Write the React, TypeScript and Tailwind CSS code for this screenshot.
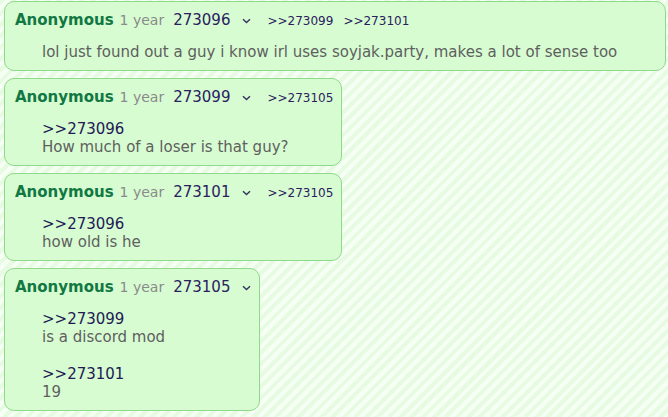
import React from "react";

type Post = {
  no: string;
  backlinks: string[];
  body: { quote?: string; text?: string; blank?: boolean }[];
  fill?: boolean;
};

const posts: Post[] = [
  {
    no: "273096",
    backlinks: ["273099", "273101"],
    body: [{ text: "lol just found out a guy i know irl uses soyjak.party, makes a lot of sense too" }],
    fill: true,
  },
  {
    no: "273099",
    backlinks: ["273105"],
    body: [{ quote: "273096" }, { text: "How much of a loser is that guy?" }],
  },
  {
    no: "273101",
    backlinks: ["273105"],
    body: [{ quote: "273096" }, { text: "how old is he" }],
  },
  {
    no: "273105",
    backlinks: [],
    body: [
      { quote: "273099" },
      { text: "is a discord mod" },
      { blank: true },
      { quote: "273101" },
      { text: "19" },
    ],
  },
];

function Chevron() {
  return (
    <svg width="9" height="6" viewBox="0 0 9 6" className="ml-[12px] self-center mt-[1px]">
      <path d="M1 1.2 L4.5 4.6 L8 1.2" fill="none" stroke="#34345c" strokeWidth="1.4" />
    </svg>
  );
}

function PostCard({ p }: { p: Post }) {
  return (
    <div
      className={
        "rounded-[10px] border border-[#8fd98a] bg-[#d7fcd1] pt-[8px] pb-[9px] pl-[10px] pr-[8px] " +
        (p.fill ? "self-stretch mr-[2px]" : "")
      }
    >
      <div className="flex items-baseline h-[20px] leading-[20px] whitespace-nowrap">
        <span className="font-bold text-[15px] text-[#117743]">Anonymous</span>
        <span className="ml-[6px] text-[14px] text-[#8a8a8a]">1 year</span>
        <span className="ml-[9px] text-[15px] text-[#2a2060]">{p.no}</span>
        <Chevron />
        {p.backlinks.map((b, i) => (
          <span
            key={b}
            className={"text-[12px] text-[#2a2060] " + (i > 0 ? "ml-[10px]" : "ml-[16px]")}
          >
            &gt;&gt;{b}
          </span>
        ))}
      </div>
      <div className="mt-[13px] ml-[27px] text-[15px] leading-[18px]">
        {p.body.map((l, i) =>
          l.blank ? (
            <div key={i} className="h-[19px]" />
          ) : l.quote ? (
            <div key={i} className="text-[#221a55]">&gt;&gt;{l.quote}</div>
          ) : (
            <div key={i} className="text-[#5f5f5f]">{l.text}</div>
          )
        )}
      </div>
    </div>
  );
}

export default function App() {
  return (
    <div
      className="w-[668px] h-[417px] overflow-hidden bg-[repeating-linear-gradient(135deg,#e6fbe1_0px,#e6fbe1_4px,#f5fff3_4px,#f5fff3_8px)]"
      style={{ fontFamily: '"DejaVu Sans", Verdana, sans-serif' }}
    >
      <div className="flex flex-col items-start gap-[7px] pl-[4px] pt-[1px]">
        {posts.map((p) => (
          <PostCard key={p.no} p={p} />
        ))}
      </div>
    </div>
  );
}
